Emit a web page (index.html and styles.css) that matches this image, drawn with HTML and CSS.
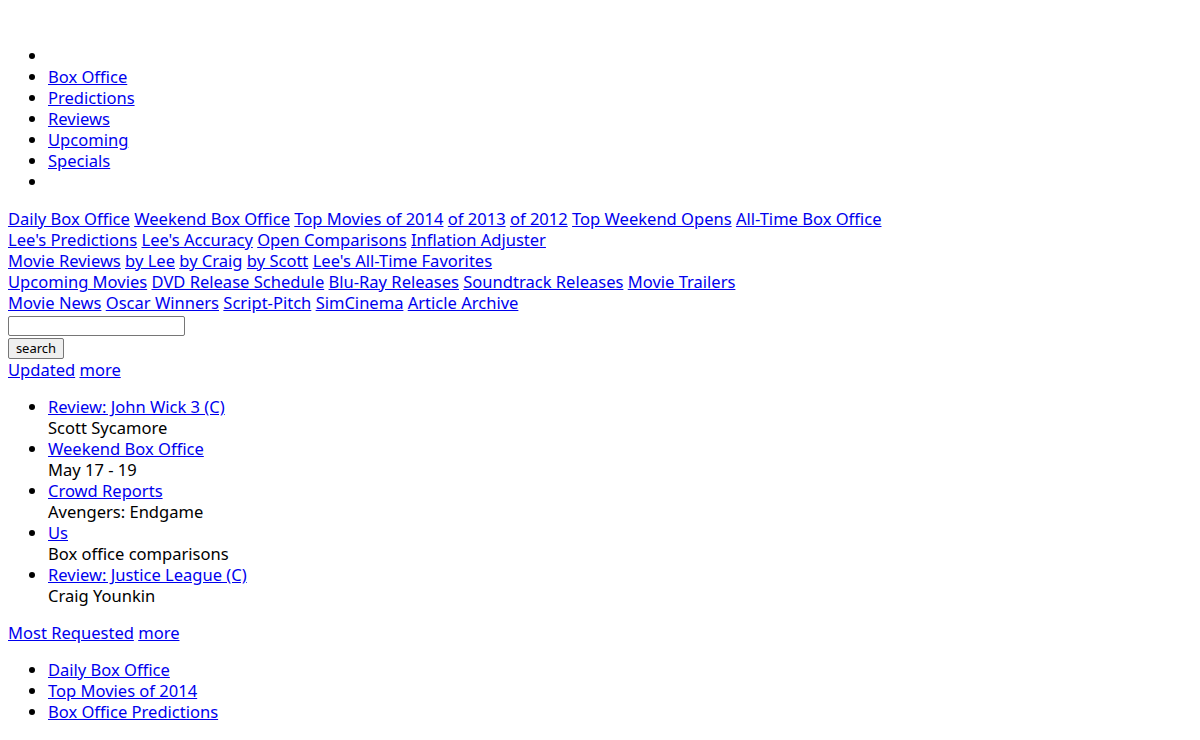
FILE: index.html
```html
<!DOCTYPE html>
<html>
<head>
<meta charset="utf-8">
<link rel="stylesheet" href="styles.css">
</head>
<body>
<div class="logo"></div>
<ul class="list">
<li></li>
<li><a href="#">Box Office</a></li>
<li><a href="#">Predictions</a></li>
<li><a href="#">Reviews</a></li>
<li><a href="#">Upcoming</a></li>
<li><a href="#">Specials</a></li>
<li></li>
</ul>
<div class="links">
<div><a href="#">Daily Box Office</a> <a href="#">Weekend Box Office</a> <a href="#">Top Movies of 2014</a> <a href="#">of 2013</a> <a href="#">of 2012</a> <a href="#">Top Weekend Opens</a> <a href="#">All-Time Box Office</a></div>
<div><a href="#">Lee's Predictions</a> <a href="#">Lee's Accuracy</a> <a href="#">Open Comparisons</a> <a href="#">Inflation Adjuster</a></div>
<div><a href="#">Movie Reviews</a> <a href="#">by Lee</a> <a href="#">by Craig</a> <a href="#">by Scott</a> <a href="#">Lee's All-Time Favorites</a></div>
<div><a href="#">Upcoming Movies</a> <a href="#">DVD Release Schedule</a> <a href="#">Blu-Ray Releases</a> <a href="#">Soundtrack Releases</a> <a href="#">Movie Trailers</a></div>
<div><a href="#">Movie News</a> <a href="#">Oscar Winners</a> <a href="#">Script-Pitch</a> <a href="#">SimCinema</a> <a href="#">Article Archive</a></div>
</div>
<form class="search">
<input type="text" class="field">
<button type="button" class="btn">search</button>
</form>
<div class="head"><a href="#">Updated</a> <a href="#">more</a></div>
<ul class="list">
<li><a href="#">Review: John Wick 3 (C)</a><br>Scott Sycamore</li>
<li><a href="#">Weekend Box Office</a><br>May 17 - 19</li>
<li><a href="#">Crowd Reports</a><br>Avengers: Endgame</li>
<li><a href="#">Us</a><br>Box office comparisons</li>
<li><a href="#">Review: Justice League (C)</a><br>Craig Younkin</li>
</ul>
<div class="head"><a href="#">Most Requested</a> <a href="#">more</a></div>
<ul class="list">
<li><a href="#">Daily Box Office</a></li>
<li><a href="#">Top Movies of 2014</a></li>
<li><a href="#">Box Office Predictions</a></li>
</ul>
</body>
</html>
```
FILE: styles.css
```css
html, body {
  background: #fff;
}
body {
  margin: 8px;
  font-family: "Noto Sans", "Open Sans", sans-serif;
  font-size: 16.55px;
  line-height: 21px;
  color: #000;
}
a {
  color: #0000ee;
  text-decoration: underline;
}
.logo {
  height: 21px;
}
.list {
  margin: 16px 0;
  padding-left: 40px;
}
.search {
  margin: 0;
  display: flex;
  flex-direction: column;
  align-items: flex-start;
  padding-top: 3px;
}
.field {
  margin: 0;
  width: 177px;
  height: 20px;
  box-sizing: border-box;
  border: 1px solid #767676;
  border-radius: 2px;
  padding: 1px 2px;
  font-family: "Noto Sans", sans-serif;
  font-size: 13px;
}
.btn {
  margin: 2px 0 0;
  width: 56px;
  height: 21px;
  box-sizing: border-box;
  border: 1px solid #767676;
  border-radius: 2px;
  background: #efefef;
  padding: 0;
  font-family: "Noto Sans", sans-serif;
  font-size: 13px;
  line-height: 17px;
  color: #000;
}
.head {
  margin-top: 0;
}
```
